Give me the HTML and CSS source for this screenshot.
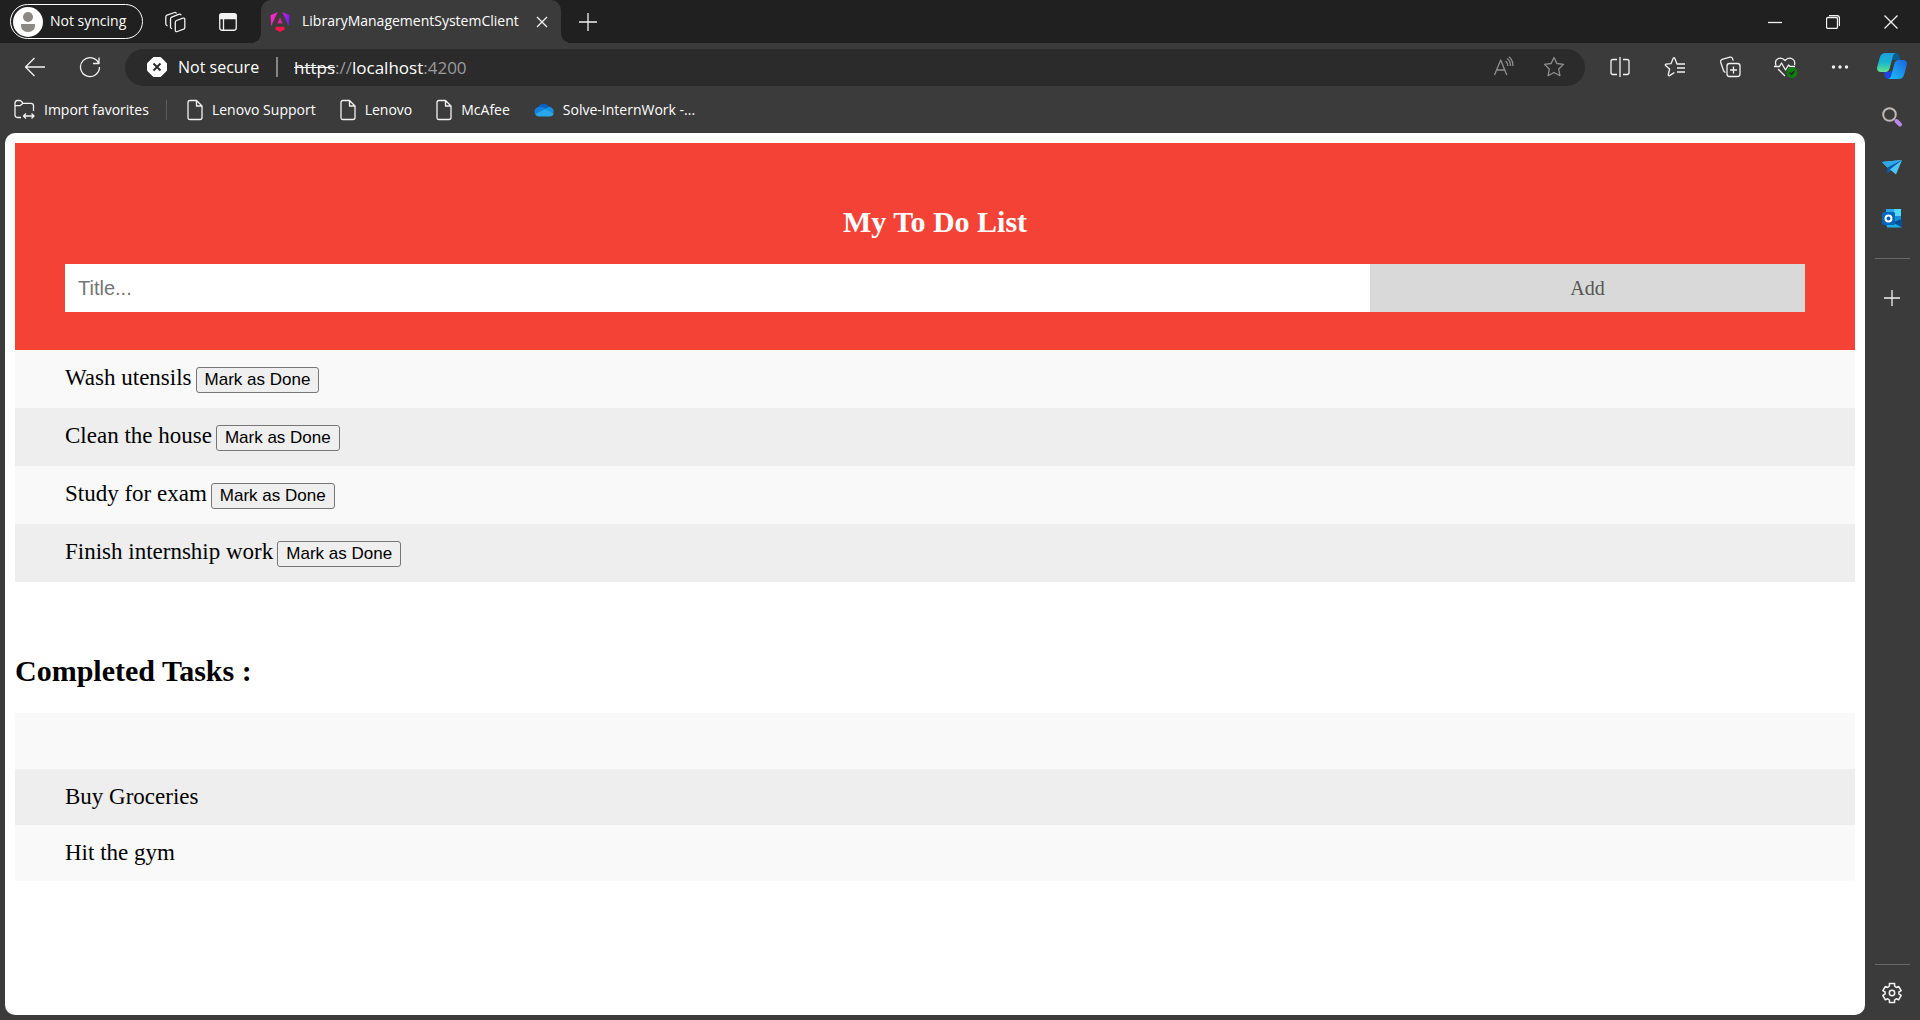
FILE: index.html
```html
<!DOCTYPE html>
<html lang="en">
<head>
<meta charset="utf-8">
<title>LibraryManagementSystemClient</title>
<link rel="stylesheet" href="styles.css">
</head>
<body>
<header class="tabbar">
  <button class="profile" type="button">
    <svg width="30" height="30" viewBox="0 0 30 30"><circle cx="15" cy="15" r="15" fill="#fff"/><circle cx="15" cy="10" r="5" fill="#8b8885"/><path d="M8 17h14v1.500q0 6.500-7 6.500t-7-6.500z" fill="#8b8885"/></svg>
    <span>Not syncing</span>
  </button>
  <button class="tool tool-workspaces" type="button" aria-label="Workspaces">
    <svg class="line" width="24" height="24" viewBox="0 0 24 24"><path d="M13.500 10.500l6.500-2.300q1.800-.6 1.800 1.200v8q0 1.300-1.200 1.800l-6.300 2.300q-2 .6-2-1.200v-7.800q0-1.500 1.200-2zM9 18.800l-.8-.5q-.7-.5-.7-1.500V9q0-1.300 1.200-1.800l7.600-3q1.400-.4 1.900 1M4.600 16l-.9-.5q-.9-.6-.9-1.700V7Q2.800 5.600 4 5.100l7.600-2.600q1.400-.4 1.900 1"/></svg>
  </button>
  <button class="tool tool-tabs" type="button" aria-label="Tab actions">
    <svg class="line" width="24" height="24" viewBox="0 0 24 24"><rect x="3.750" y="3.750" width="16.500" height="16.500" rx="2.500"/><path d="M4 4.500h16v4H4z" fill="#f2f2f2"/><path d="M7.500 8v12"/></svg>
  </button>
  <div class="tab">
    <svg width="20" height="20" viewBox="0 0 24 24"><defs><linearGradient id="ng" x1="0" y1="0.200" x2="1" y2="0.400"><stop offset="0" stop-color="#fa2cc4"/><stop offset=".5" stop-color="#e020c8"/><stop offset="1" stop-color="#7a1cff"/></linearGradient></defs><path fill="url(#ng)" d="M14.692 0l7.832 16.855.814-12.856L14.692 0ZM9.308 0L.662 3.999l.814 12.856L9.308 0Z"/><path fill="#e61ea0" d="M8.903 13.930h6.198L12 6.396z"/><path fill="#ff1450" d="M16.712 17.711H7.288l-1.204 2.916L12 24l5.916-3.373z"/></svg>
    <span class="tab-title">LibraryManagementSystemClient</span>
    <button class="tab-close" type="button" aria-label="Close tab"><svg class="line" width="12" height="12" viewBox="0 0 12 12"><path d="M1 1l10 10M11 1L1 11"/></svg></button>
  </div>
  <button class="new-tab" type="button" aria-label="New tab"><svg class="line" width="18" height="18" viewBox="0 0 18 18"><path d="M9 0v18M0 9h18"/></svg></button>
  <div class="window-controls">
    <button type="button" aria-label="Minimize"><svg class="line" width="14" height="14" viewBox="0 0 14 14"><path d="M0 7.500h14"/></svg></button>
    <button type="button" aria-label="Restore"><svg class="line" width="14" height="14" viewBox="0 0 14 14"><rect x=".5" y="2.500" width="11" height="11" rx="1.500"/><path d="M3 .5h7.500q3 0 3 3V11"/></svg></button>
    <button type="button" aria-label="Close"><svg class="line" width="14" height="14" viewBox="0 0 14 14"><path d="M.5.500l13 13M13.500.500l-13 13"/></svg></button>
  </div>
</header>

<div class="frame">
  <div class="browser">
    <nav class="toolbar">
      <button class="nav-btn" type="button" aria-label="Back"><svg class="line" width="22" height="22" viewBox="0 0 22 22"><path d="M21 11H1.500M10.500 2l-9 9 9 9"/></svg></button>
      <button class="nav-btn" type="button" aria-label="Refresh"><svg class="line" width="22" height="22" viewBox="0 0 22 22"><path d="M19.800 7.500A9.500 9.500 0 1 0 20.500 11M20 1.500v6h-6"/></svg></button>
      <div class="address">
        <svg width="20" height="20" viewBox="0 0 20 20"><path d="M6.300.500h7.400l5.800 5.800v7.400l-5.800 5.800H6.300L.5 13.700V6.300z" fill="#fff" stroke="#fff" stroke-linejoin="round"/><path d="M6.500 6.500l7 7M13.500 6.500l-7 7" stroke="#2b2b2b" stroke-width="2"/></svg>
        <span class="secure">Not secure</span>
        <span class="address-rule"></span>
        <span class="url"><s>https</s><span class="dim">://</span>localhost<span class="dim">:4200</span></span>
        <button class="address-btn" type="button" aria-label="Read aloud"><svg class="line dim-line" width="24" height="24" viewBox="0 0 24 24"><path d="M2.500 20L8.700 5l6.100 15M4.600 15h8.200M13.500 6q2.300 2 2.300 5M15 3.500q3.500 2.500 3.500 7.500M17 1.800q4 3.500 4 9.200"/></svg></button>
        <button class="address-btn" type="button" aria-label="Add to favorites"><svg class="line dim-line" width="24" height="24" viewBox="0 0 24 24"><path d="M12 2.500l2.900 6 6.600.900-4.800 4.600 1.200 6.700L12 17.500l-5.900 3.200L7.300 14 2.500 9.400l6.600-.9z"/></svg></button>
      </div>
      <div class="toolbar-actions">
        <button type="button" aria-label="Split screen"><svg class="line" width="24" height="24" viewBox="0 0 24 24"><path d="M9 4.500H5q-2 0-2 2v11q0 2 2 2h4M15 4.500h4q2 0 2 2v11q0 2-2 2h-4M12 2v20"/></svg></button>
        <button type="button" aria-label="Favorites"><svg class="line" width="24" height="24" viewBox="0 0 24 24"><path d="M14.500 9H14l-2.200-5.700q-.8-1.400-1.600 0L8 8.700l-5 .5q-1.200.4-.4 1.300L6.600 14l-1.300 5.500q0 1.700 1.300 1.100l4.800-3.100M14 9h8M14 13h8M14 17h8"/></svg></button>
        <button type="button" aria-label="Collections"><svg class="line" width="24" height="24" viewBox="0 0 24 24"><rect x="9" y="8.500" width="13" height="13" rx="2.500"/><path d="M15.500 11.500v7M12 15h7M7.500 17.500Q6 17 5.500 15.500L2.700 7.200q-.5-2 1.300-2.800l8-2.200q2-.4 2.600 1.400l.6 2"/></svg></button>
        <button type="button" aria-label="Browser essentials"><svg class="line" width="26" height="26" viewBox="0 0 26 26"><path d="M4 11.500Q2.500 6.500 5.500 5q4-2.300 7.500 1.500Q16.500 2.700 20.500 5 23.500 6.500 22.500 11M6 15l7 7M2 12.500h5.500l2-3.500 4 7 3-5 1.500 1.500h5"/><circle cx="20" cy="18.500" r="5.500" fill="#107c10" stroke="none"/><path d="M17.500 18.500l2 2 3-3.500" stroke="#222"/></svg></button>
        <button type="button" aria-label="Settings and more"><svg width="18" height="4" viewBox="0 0 18 4"><g fill="#f2f2f2"><circle cx="2.500" cy="2" r="1.700"/><circle cx="9" cy="2" r="1.700"/><circle cx="15.500" cy="2" r="1.700"/></g></svg></button>
      </div>
    </nav>

    <nav class="favorites">
      <a href="#"><svg class="line" width="22" height="22" viewBox="0 0 22 22"><path d="M8 18.500H4.500Q2 18.500 2 16V4q0-2.500 2.500-2.500h2Q8 1.500 9 3l1 1.300h8q2.500 0 2.500 2.500V12M2 6.700h5l3-2.400M10.500 17h10.500M13 14.500L10.500 17l2.500 2.500M18.500 14.500l2.500 2.500-2.500 2.500"/></svg>Import favorites</a>
      <span class="favorites-rule"></span>
      <a href="#"><svg class="line" width="16" height="22" viewBox="0 0 16 22"><path d="M3 1.500h6.500l5.500 5.500v11.500q0 2-2 2H3q-2 0-2-2v-15q0-2 2-2zM9.500 1.500V7H15"/></svg>Lenovo Support</a>
      <a href="#"><svg class="line" width="16" height="22" viewBox="0 0 16 22"><path d="M3 1.500h6.500l5.500 5.500v11.500q0 2-2 2H3q-2 0-2-2v-15q0-2 2-2zM9.500 1.500V7H15"/></svg>Lenovo</a>
      <a href="#"><svg class="line" width="16" height="22" viewBox="0 0 16 22"><path d="M3 1.500h6.500l5.500 5.500v11.500q0 2-2 2H3q-2 0-2-2v-15q0-2 2-2zM9.500 1.500V7H15"/></svg>McAfee</a>
      <a href="#"><svg width="20" height="14" viewBox="0 0 20 14"><path d="M5 12.500a5 5 0 0 1-.5-9A6 6 0 0 1 15 4l-4 6z" fill="#0a63c4"/><path d="M4 4.200Q8 3 11.500 6L1.500 11.500A4.500 4.500 0 0 1 4 4.200z" fill="#1380dc"/><path d="M10 6.500l5-2.700a5 5 0 0 1 4.700 5.700l-6 .500z" fill="#168fe0"/><path d="M1.200 11.200L11 6l8.600 4.200q-.5 3.300-4 3.300H5q-2.700 0-3.800-2.300z" fill="#28a8ea"/></svg>Solve-InternWork -...</a>
    </nav>

    <main class="page">
      <section class="todo-head">
        <h2>My To Do List</h2>
        <form class="todo-form">
          <input type="text" placeholder="Title..." aria-label="Title">
          <button type="button">Add</button>
        </form>
      </section>
      <ul class="tasks tasks-open">
        <li><span>Wash utensils</span><button type="button">Mark as Done</button></li>
        <li><span>Clean the house</span><button type="button">Mark as Done</button></li>
        <li><span>Study for exam</span><button type="button">Mark as Done</button></li>
        <li><span>Finish internship work</span><button type="button">Mark as Done</button></li>
      </ul>
      <h2 class="done-title">Completed Tasks :</h2>
      <ul class="tasks">
        <li></li>
        <li>Buy Groceries</li>
        <li>Hit the gym</li>
      </ul>
    </main>
  </div>

  <aside class="sidebar">
    <button class="copilot" type="button" aria-label="Copilot"><svg width="30" height="28" viewBox="0 0 30 28"><defs><linearGradient id="c1" x1="0" y1="0" x2="0" y2="1"><stop offset="0" stop-color="#1b9fe0"/><stop offset=".5" stop-color="#18b5cf"/><stop offset="1" stop-color="#63e48d"/></linearGradient><linearGradient id="c2" x1="1" y1="0" x2="0" y2="1"><stop offset="0" stop-color="#1b63dc"/><stop offset=".6" stop-color="#1b9cf0"/><stop offset="1" stop-color="#12c3f5"/></linearGradient></defs><path d="M15 1h4q2.500 0 3.300 2.500L23.500 8H15z" fill="#0a5c95"/><path d="M15 27h-4q-2.500 0-3.300-2.500L6.500 19.500H15z" fill="#1f45e0"/><path d="M8.500 1H19q-2.300 0-3 2.700l-3.300 12.600q-1 3.700-4.200 3.700H4q-4.800 0-3.800-5L2.800 5.500Q4 1 8.500 1z" fill="url(#c1)"/><path d="M21.500 27H11q2.300 0 3-2.700l3.300-12.600Q18.300 8 21.500 8H26q4.800 0 3.800 5l-2.600 9.500Q26 27 21.500 27z" fill="url(#c2)"/></svg></button>
    <button type="button" aria-label="Search"><svg width="22" height="22" viewBox="0 0 22 22"><circle cx="8.500" cy="8.500" r="6.300" fill="none" stroke="#bdbab8" stroke-width="2"/><path d="M15.500 15l3.500 3.500" stroke="#b88ae8" stroke-width="4" stroke-linecap="round"/></svg></button>
    <button type="button" aria-label="Drop"><svg width="22" height="18" viewBox="0 0 22 18"><path d="M1 3l20-2L7 9z" fill="#5bd0fa"/><path d="M1 3l20-2-14 8z" fill="#2fa9ea"/><path d="M6.500 8.500L21 1 6 14z" fill="#075aa5"/><path d="M6 14l4-5L21 1 9 12z" fill="#1172c4"/><path d="M9 10.500L21 1l-6 14.500z" fill="#4cc4f5"/></svg></button>
    <button type="button" aria-label="Outlook"><svg width="20" height="20" viewBox="0 0 20 20"><rect x="4" y="0" width="15" height="17" rx="1" fill="#1490df"/><path d="M12 0h7v7h-7z" fill="#50d9ff"/><path d="M4 0h8v6H4z" fill="#28a8ea"/><path d="M5 11h15v7.500H5z" fill="#1aafe8"/><path d="M20 10v8.500L10 13z" fill="#0a4d95"/><rect x="0" y="3" width="13" height="13" rx="1.500" fill="#0364b8"/><circle cx="6.500" cy="9.500" r="3" fill="none" stroke="#fff" stroke-width="2"/></svg></button>
    <hr>
    <button type="button" aria-label="Customize"><svg class="line" width="16" height="16" viewBox="0 0 16 16"><path d="M8 0v16M0 8h16"/></svg></button>
    <hr class="side-end">
    <button class="side-settings" type="button" aria-label="Settings"><svg class="line" width="24" height="24" viewBox="0 0 24 24"><path stroke-width="1.500" d="M9.400 2.400h5.200V5l1.700 1.500 2.300-1 2.600 4.200L18.900 11v2l2.300 1.300-2.600 4.500-2.300-1-1.700 1.200v2.600H9.400V19l-1.700-1.200-2.300 1-2.600-4.500L5.100 13v-2L2.800 9.700l2.600-4.200 2.300 1L9.400 5z"/><circle cx="12" cy="12" r="2.700" stroke-width="1.500"/></svg></button>
  </aside>
</div>
</body>
</html>
```
FILE: styles.css
```css
* { box-sizing: border-box; }

body {
  margin: 0;
  min-height: 100vh;
  display: flex;
  flex-direction: column;
  background: #3b3b3b;
  color: #fff;
  font-family: "Open Sans", "Noto Sans", sans-serif;
  font-size: 14px;
}

button {
  padding: 0;
  border: 0;
  background: none;
  color: inherit;
  font: inherit;
}

svg { display: block; flex: none; }

.line { fill: none; stroke: #f2f2f2; stroke-width: 1.3; stroke-linejoin: round; }
.dim-line { stroke: #909090; }

/* Tab strip */
.tabbar {
  display: flex;
  align-items: center;
  height: 43px;
  padding-left: 10px;
  background: #202020;
}

.profile {
  display: flex;
  align-items: center;
  gap: 7px;
  width: 133px;
  height: 35px;
  padding-left: 2px;
  border: 1px solid #fff;
  border-radius: 18px;
  white-space: nowrap;
}

.profile span { padding-bottom: 2px; }

.tool-workspaces { margin-left: 20px; }
.tool-tabs { margin-left: 29px; }

.tab {
  position: relative;
  display: flex;
  align-items: center;
  gap: 12px;
  align-self: stretch;
  width: 300px;
  margin-left: 21px;
  padding: 0 13px 0 9px;
  border-radius: 10px 10px 0 0;
  background: #3b3b3b;
}

.tab::before,
.tab::after {
  content: "";
  position: absolute;
  bottom: 0;
  width: 10px;
  height: 10px;
}

.tab::before { right: 100%; background: radial-gradient(circle at 0 0, #202020 10px, #3b3b3b 10px); }
.tab::after { left: 100%; background: radial-gradient(circle at 100% 0, #202020 10px, #3b3b3b 10px); }

.tab-title { flex: 1; padding-bottom: 2px; white-space: nowrap; }
.new-tab { margin-left: 18px; }

.window-controls { display: flex; margin-left: auto; }
.window-controls button { display: grid; place-items: center; width: 58px; height: 43px; }

/* Window body */
.frame { flex: 1; display: flex; }
.browser { flex: 1; display: flex; flex-direction: column; min-width: 0; }

.toolbar {
  display: flex;
  align-items: center;
  height: 48px;
  padding-left: 7px;
}

.nav-btn { display: grid; place-items: center; width: 55px; height: 37px; }

.address {
  flex: 1;
  display: flex;
  align-items: center;
  height: 37px;
  margin: 0 7px 0 8px;
  padding: 0 19px 0 22px;
  border-radius: 19px;
  background: #2b2b2b;
  font-size: 16px;
}

.secure { margin-left: 11px; width: 98px; white-space: nowrap; }
.address-rule { width: 2px; height: 20px; background: #858585; }
.url { flex: 1; margin-left: 16px; font-size: 17px; }
.dim { color: #9a9a9a; }
.address-btn { margin-left: 26px; }

.toolbar-actions { display: flex; }
.toolbar-actions button { display: grid; place-items: center; width: 55px; height: 37px; }

.favorites {
  display: flex;
  align-items: center;
  gap: 24px;
  height: 42px;
  padding: 0 0 5px 13px;
}

.favorites a {
  display: flex;
  align-items: center;
  gap: 9px;
  color: #fff;
  text-decoration: none;
  white-space: nowrap;
}

.favorites-rule { width: 1px; height: 20px; margin: 0 -4px 0 -7px; background: #5c5c5c; }

/* Page viewport */
.page {
  flex: 1;
  margin: 0 2px 5px 5px;
  padding: 10px;
  border-radius: 10px;
  background: #fff;
  color: #000;
  font-family: "Liberation Serif", serif;
  font-size: 23px;
}

.page h2 { margin: 25px 0; font-size: 30px; line-height: 34px; }

.todo-head {
  display: flow-root;
  padding: 37px 50px 38px;
  background: #f44336;
  color: #fff;
  text-align: center;
}

.todo-form { display: flex; height: 48px; }

.todo-form input {
  width: 75%;
  border: 0;
  padding: 0 13px;
  font-family: "Liberation Sans", sans-serif;
  font-size: 20px;
}

.todo-form input::placeholder { color: #757575; }

.todo-form button { width: 25%; background: #d9d9d9; color: #555; font-size: 20px; }

.tasks { margin: 0; padding: 0; list-style: none; }
.tasks li { min-height: 56px; padding: 15px 50px; background: #f9f9f9; line-height: 26px; }
.tasks li:nth-child(even) { background: #eee; }

.tasks-open li { display: flex; align-items: baseline; gap: 4px; min-height: 58px; }

.tasks-open button {
  height: 26px;
  padding: 0 8px;
  border: 1px solid #767676;
  border-radius: 3px;
  background: #efefef;
  font-family: "Liberation Sans", sans-serif;
  font-size: 17px;
  line-height: 24px;
}

.page .done-title { margin-top: 72px; }

/* Side rail */
.sidebar {
  display: flex;
  flex-direction: column;
  align-items: center;
  width: 53px;
  padding: 9px 3px 0 0;
}

.sidebar button { display: grid; place-items: center; width: 40px; height: 51px; }
.sidebar .copilot { height: 28px; margin-bottom: 11px; }
.sidebar hr { width: 35px; height: 1px; margin: 14px 0 13px; border: 0; background: #686868; }
.sidebar .side-end { margin: auto 0 0; }
.sidebar .side-settings { height: 55px; }
```
